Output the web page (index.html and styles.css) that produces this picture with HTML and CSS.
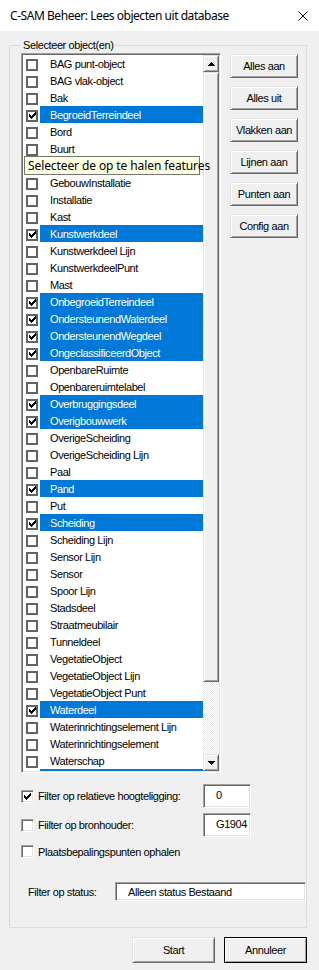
FILE: index.html
```html
<!DOCTYPE html>
<html lang="nl">
<head>
    <meta charset="UTF-8">
    <meta name="viewport" content="width=device-width, initial-scale=1.0">
    <title>C-SAM Beheer: Lees objecten uit database</title>
    <link rel="stylesheet" href="styles.css">
</head>
<body>

    <div class="window">
        <div class="titlebar">
            <span class="title">C-SAM Beheer: Lees objecten uit database</span>
            <svg class="close-icon" width="10" height="10" viewBox="0 0 10 10">
                <path d="M0.5 0.5L9.5 9.5M9.5 0.5L0.5 9.5" stroke="#000" stroke-width="1"/>
            </svg>
        </div>

        <div class="client">
            <div class="group">
                <span class="group-label">Selecteer object(en)</span>

                <div class="top-row">
                    <div class="listbox">
                        <ul class="items">
                            <li class="item"><span class="check"></span><span class="label">BAG punt-object</span></li>
                            <li class="item"><span class="check"></span><span class="label">BAG vlak-object</span></li>
                            <li class="item"><span class="check"></span><span class="label">Bak</span></li>
                            <li class="item is-selected"><span class="check"><svg width="7" height="7" viewBox="0 0 7 7"><path d="M0 2h1v1h1v1h1v-1h1v-1h1v-1h1v-1h1v3h-1v1h-1v1h-1v1h-1v1h-1v-1h-1v-1h-1z" fill="#000"/></svg></span><span class="label">BegroeidTerreindeel</span></li>
                            <li class="item"><span class="check"></span><span class="label">Bord</span></li>
                            <li class="item"><span class="check"></span><span class="label">Buurt</span></li>
                            <li class="item"><span class="check"></span><span class="label">Gebouw</span></li>
                            <li class="item"><span class="check"></span><span class="label">GebouwInstallatie</span></li>
                            <li class="item"><span class="check"></span><span class="label">Installatie</span></li>
                            <li class="item"><span class="check"></span><span class="label">Kast</span></li>
                            <li class="item is-selected"><span class="check"><svg width="7" height="7" viewBox="0 0 7 7"><path d="M0 2h1v1h1v1h1v-1h1v-1h1v-1h1v-1h1v3h-1v1h-1v1h-1v1h-1v1h-1v-1h-1v-1h-1z" fill="#000"/></svg></span><span class="label">Kunstwerkdeel</span></li>
                            <li class="item"><span class="check"></span><span class="label">Kunstwerkdeel Lijn</span></li>
                            <li class="item"><span class="check"></span><span class="label">KunstwerkdeelPunt</span></li>
                            <li class="item"><span class="check"></span><span class="label">Mast</span></li>
                            <li class="item is-selected"><span class="check"><svg width="7" height="7" viewBox="0 0 7 7"><path d="M0 2h1v1h1v1h1v-1h1v-1h1v-1h1v-1h1v3h-1v1h-1v1h-1v1h-1v1h-1v-1h-1v-1h-1z" fill="#000"/></svg></span><span class="label">OnbegroeidTerreindeel</span></li>
                            <li class="item is-selected"><span class="check"><svg width="7" height="7" viewBox="0 0 7 7"><path d="M0 2h1v1h1v1h1v-1h1v-1h1v-1h1v-1h1v3h-1v1h-1v1h-1v1h-1v1h-1v-1h-1v-1h-1z" fill="#000"/></svg></span><span class="label">OndersteunendWaterdeel</span></li>
                            <li class="item is-selected"><span class="check"><svg width="7" height="7" viewBox="0 0 7 7"><path d="M0 2h1v1h1v1h1v-1h1v-1h1v-1h1v-1h1v3h-1v1h-1v1h-1v1h-1v1h-1v-1h-1v-1h-1z" fill="#000"/></svg></span><span class="label">OndersteunendWegdeel</span></li>
                            <li class="item is-selected"><span class="check"><svg width="7" height="7" viewBox="0 0 7 7"><path d="M0 2h1v1h1v1h1v-1h1v-1h1v-1h1v-1h1v3h-1v1h-1v1h-1v1h-1v1h-1v-1h-1v-1h-1z" fill="#000"/></svg></span><span class="label">OngeclassificeerdObject</span></li>
                            <li class="item"><span class="check"></span><span class="label">OpenbareRuimte</span></li>
                            <li class="item"><span class="check"></span><span class="label">Openbareruimtelabel</span></li>
                            <li class="item is-selected"><span class="check"><svg width="7" height="7" viewBox="0 0 7 7"><path d="M0 2h1v1h1v1h1v-1h1v-1h1v-1h1v-1h1v3h-1v1h-1v1h-1v1h-1v1h-1v-1h-1v-1h-1z" fill="#000"/></svg></span><span class="label">Overbruggingsdeel</span></li>
                            <li class="item is-selected"><span class="check"><svg width="7" height="7" viewBox="0 0 7 7"><path d="M0 2h1v1h1v1h1v-1h1v-1h1v-1h1v-1h1v3h-1v1h-1v1h-1v1h-1v1h-1v-1h-1v-1h-1z" fill="#000"/></svg></span><span class="label">Overigbouwwerk</span></li>
                            <li class="item"><span class="check"></span><span class="label">OverigeScheiding</span></li>
                            <li class="item"><span class="check"></span><span class="label">OverigeScheiding Lijn</span></li>
                            <li class="item"><span class="check"></span><span class="label">Paal</span></li>
                            <li class="item is-selected"><span class="check"><svg width="7" height="7" viewBox="0 0 7 7"><path d="M0 2h1v1h1v1h1v-1h1v-1h1v-1h1v-1h1v3h-1v1h-1v1h-1v1h-1v1h-1v-1h-1v-1h-1z" fill="#000"/></svg></span><span class="label">Pand</span></li>
                            <li class="item"><span class="check"></span><span class="label">Put</span></li>
                            <li class="item is-selected"><span class="check"><svg width="7" height="7" viewBox="0 0 7 7"><path d="M0 2h1v1h1v1h1v-1h1v-1h1v-1h1v-1h1v3h-1v1h-1v1h-1v1h-1v1h-1v-1h-1v-1h-1z" fill="#000"/></svg></span><span class="label">Scheiding</span></li>
                            <li class="item"><span class="check"></span><span class="label">Scheiding Lijn</span></li>
                            <li class="item"><span class="check"></span><span class="label">Sensor Lijn</span></li>
                            <li class="item"><span class="check"></span><span class="label">Sensor</span></li>
                            <li class="item"><span class="check"></span><span class="label">Spoor Lijn</span></li>
                            <li class="item"><span class="check"></span><span class="label">Stadsdeel</span></li>
                            <li class="item"><span class="check"></span><span class="label">Straatmeubilair</span></li>
                            <li class="item"><span class="check"></span><span class="label">Tunneldeel</span></li>
                            <li class="item"><span class="check"></span><span class="label">VegetatieObject</span></li>
                            <li class="item"><span class="check"></span><span class="label">VegetatieObject Lijn</span></li>
                            <li class="item"><span class="check"></span><span class="label">VegetatieObject Punt</span></li>
                            <li class="item is-selected"><span class="check"><svg width="7" height="7" viewBox="0 0 7 7"><path d="M0 2h1v1h1v1h1v-1h1v-1h1v-1h1v-1h1v3h-1v1h-1v1h-1v1h-1v1h-1v-1h-1v-1h-1z" fill="#000"/></svg></span><span class="label">Waterdeel</span></li>
                            <li class="item"><span class="check"></span><span class="label">Waterinrichtingselement Lijn</span></li>
                            <li class="item"><span class="check"></span><span class="label">Waterinrichtingselement</span></li>
                            <li class="item"><span class="check"></span><span class="label">Waterschap</span></li>
                            <li class="item is-selected"><span class="check"><svg width="7" height="7" viewBox="0 0 7 7"><path d="M0 2h1v1h1v1h1v-1h1v-1h1v-1h1v-1h1v3h-1v1h-1v1h-1v1h-1v1h-1v-1h-1v-1h-1z" fill="#000"/></svg></span><span class="label">Wegdeel</span></li>
                        </ul>

                        <div class="scrollbar">
                            <div class="sb-button">
                                <svg width="7" height="4" viewBox="0 0 7 4"><path d="M3 0h1v1h1v1h1v1h1v1h-7v-1h1v-1h1v-1h1z" fill="#000"/></svg>
                            </div>
                            <div class="sb-thumb"></div>
                            <div class="sb-track"></div>
                            <div class="sb-button">
                                <svg width="7" height="4" viewBox="0 0 7 4"><path d="M0 0h7v1h-1v1h-1v1h-1v1h-1v-1h-1v-1h-1v-1h-1z" fill="#000"/></svg>
                            </div>
                        </div>
                    </div>

                    <div class="side-buttons">
                        <button class="btn btn-side">Alles aan</button>
                        <button class="btn btn-side">Alles uit</button>
                        <button class="btn btn-side">Vlakken aan</button>
                        <button class="btn btn-side">Lijnen aan</button>
                        <button class="btn btn-side">Punten aan</button>
                        <button class="btn btn-side">Config aan</button>
                    </div>
                </div>

                <div class="filter-row row-relative">
                    <span class="box"><svg width="7" height="7" viewBox="0 0 7 7"><path d="M0 2h1v1h1v1h1v-1h1v-1h1v-1h1v-1h1v3h-1v1h-1v1h-1v1h-1v1h-1v-1h-1v-1h-1z" fill="#000"/></svg></span>
                    <span class="filter-label">Filter op relatieve hoogteligging:</span>
                    <span class="textbox">0</span>
                </div>
                <div class="filter-row row-bron">
                    <span class="box"></span>
                    <span class="filter-label">Fiilter op bronhouder:</span>
                    <span class="textbox">G1904</span>
                </div>
                <div class="filter-row row-plaats">
                    <span class="box"></span>
                    <span class="filter-label">Plaatsbepalingspunten ophalen</span>
                </div>
                <div class="filter-row row-status">
                    <span class="status-label">Filter op status:</span>
                    <span class="combo">Alleen status Bestaand</span>
                </div>
            </div>

            <div class="footer">
                <button class="btn btn-footer">Start</button>
                <button class="btn btn-footer btn-default">Annuleer</button>
            </div>
        </div>

        <div class="tooltip">Selecteer de op te halen features</div>
    </div>

</body>
</html>
```

FILE: styles.css
```css
body {
    margin: 0;
    background-color: #f0f0f0;
    font-family: "Liberation Sans", Arial, sans-serif;
    font-size: 11px;
    letter-spacing: -0.4px;
    color: #000;
}

.window {
    position: relative;
    width: 319px;
    height: 970px;
    background-color: #f0f0f0;
}

.titlebar {
    height: 31px;
    background-color: #fff;
    display: flex;
    align-items: center;
    justify-content: space-between;
    padding: 0 11px 0 10px;
}

.title {
    font-family: "Noto Sans", sans-serif;
    font-size: 12px;
    letter-spacing: -0.45px;
}

.close-icon {
    display: block;
}

.client {
    padding: 14px 12px 0 9px;
}

/* group box with the label over its top line */
.group {
    position: relative;
    height: 883px;
    box-sizing: border-box;
    border: 1px solid #dcdcdc;
    padding: 7px 0 0 11px;
}

.group-label {
    position: absolute;
    top: -7px;
    left: 11px;
    padding: 0 2px;
    line-height: 13px;
    background-color: #f0f0f0;
}

.top-row {
    display: flex;
    gap: 9px;
    align-items: flex-start;
}

/* sunken 3d edge */
.listbox,
.box,
.textbox,
.combo {
    box-sizing: border-box;
    border: 1px solid;
    border-color: #a0a0a0 #fff #fff #a0a0a0;
    box-shadow: inset 1px 1px #696969, inset -1px -1px #e3e3e3;
    background-color: #fff;
}

.listbox {
    display: flex;
    width: 200px;
    height: 720px;
    padding: 1px;
}

.items {
    flex: 1;
    margin: 0;
    padding: 0;
    list-style: none;
    overflow: hidden;
}

.item {
    display: flex;
    align-items: center;
    height: 17px;
}

.check {
    flex: none;
    width: 12px;
    height: 12px;
    box-sizing: border-box;
    margin: 2px 2px 0 3px;
    border: 2px solid #646464;
    background-color: #fff;
    display: flex;
    align-items: center;
    justify-content: center;
}

.check svg,
.box svg {
    display: block;
}

.label {
    flex: 1;
    height: 100%;
    padding-left: 10px;
    display: flex;
    align-items: center;
    white-space: nowrap;
}

.item.is-selected .label {
    background-color: #0078d7;
    color: #fff;
}

.scrollbar {
    flex: none;
    width: 16px;
    display: flex;
    flex-direction: column;
}

/* raised 3d edge */
.sb-button,
.sb-thumb,
.btn {
    box-sizing: border-box;
    border: 1px solid;
    border-color: #e3e3e3 #696969 #696969 #e3e3e3;
    box-shadow: inset 1px 1px #fff, inset -1px -1px #a0a0a0;
    background-color: #f0f0f0;
}

.sb-button {
    height: 17px;
    display: flex;
    align-items: center;
    justify-content: center;
}

.sb-thumb {
    height: 610px;
}

.sb-track {
    flex: 1;
    background-color: #fff;
    background-image: conic-gradient(#e8e8e8 25%, #fff 0 50%, #e8e8e8 0 75%, #fff 0);
    background-size: 2px 2px;
}

.btn {
    font-family: "Liberation Sans", Arial, sans-serif;
    font-size: 11px;
    letter-spacing: -0.4px;
    color: #000;
    padding: 0;
}

.side-buttons {
    display: flex;
    flex-direction: column;
    gap: 8px;
    margin-top: 1px;
}

.btn-side {
    width: 68px;
    height: 24px;
}

.filter-row {
    display: flex;
    align-items: center;
}

.row-relative {
    margin-top: 11px;
    height: 24px;
}

.row-bron {
    margin-top: 5px;
    height: 24px;
}

.row-plaats {
    margin-top: 6px;
    height: 17px;
}

.row-status {
    margin-top: 22px;
    height: 19px;
}

.box {
    flex: none;
    width: 13px;
    height: 13px;
    margin-right: 4px;
    display: flex;
    align-items: center;
    justify-content: center;
}

.filter-label {
    width: 165px;
    white-space: nowrap;
}

.textbox {
    width: 48px;
    height: 24px;
    padding: 0 0 2px 12px;
    display: flex;
    align-items: center;
}

.status-label {
    flex: none;
    width: 87px;
    padding-left: 7px;
}

.combo {
    flex: 1;
    height: 19px;
    padding-left: 12px;
    display: flex;
    align-items: center;
}

.footer {
    display: flex;
    justify-content: flex-end;
    gap: 9px;
    margin-top: 9px;
}

.btn-footer {
    width: 83px;
    height: 26px;
}

.btn-default {
    outline: 1px solid #000;
    outline-offset: -1px;
}

.tooltip {
    position: absolute;
    left: 24px;
    top: 156px;
    width: 176px;
    height: 19px;
    box-sizing: border-box;
    border: 1px solid #767676;
    background-color: #ffffe1;
    padding-left: 3px;
    font-family: "Noto Sans", sans-serif;
    font-size: 12px;
    letter-spacing: -0.1px;
    line-height: 17px;
    white-space: nowrap;
}
```
